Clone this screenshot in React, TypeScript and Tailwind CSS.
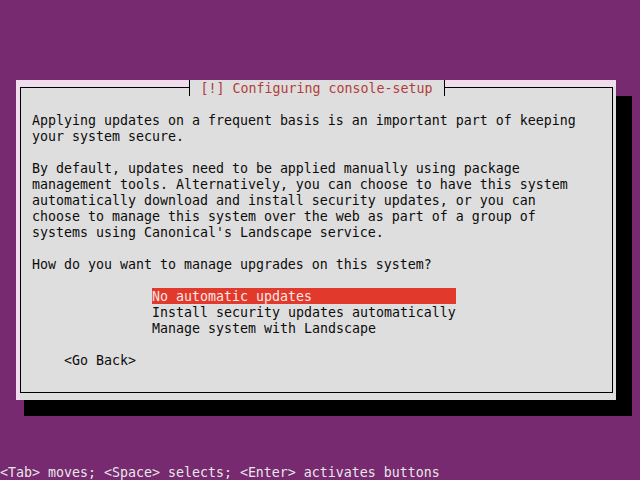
const INTRO = [
  "Applying updates on a frequent basis is an important part of keeping",
  "your system secure.",
  "",
  "By default, updates need to be applied manually using package",
  "management tools. Alternatively, you can choose to have this system",
  "automatically download and install security updates, or you can",
  "choose to manage this system over the web as part of a group of",
  "systems using Canonical's Landscape service.",
  "",
  "How do you want to manage upgrades on this system?",
  "",
];

const CHOICES = [
  "No automatic updates",
  "Install security updates automatically",
  "Manage system with Landscape",
];

// one text cell row: 16px tall, glyphs nudged down a px like the console font
const ROW = "h-[16px] whitespace-pre pt-[2px] leading-[14px]";

function Row({ children }: { children?: React.ReactNode }) {
  return <div className={ROW}>{children}</div>;
}

function DialogTitle() {
  return (
    <div className="-mt-[8px] flex h-[16px] justify-center">
      {/* ┤ */}
      <div className="flex h-[16px] w-[8px]">
        <div className="w-[4px]" />
        <div className="w-[1px] bg-black" />
        <div className="w-[3px] bg-[#dedede]" />
      </div>
      <div className={`${ROW} bg-[#dedede] text-[#b43c3c]`}>
        {" [!] Configuring console-setup "}
      </div>
      {/* ├ */}
      <div className="flex h-[16px] w-[8px]">
        <div className="w-[4px] bg-[#dedede]" />
        <div className="w-[1px] bg-black" />
        <div className="w-[3px]" />
      </div>
    </div>
  );
}

export default function App() {
  return (
    <div className="flex h-[480px] w-[640px] flex-col overflow-hidden bg-[#772a6f] font-['DejaVu_Sans_Mono',monospace] text-[13.29px] text-[#0c0c0c]">
      <div className="ml-[16px] mt-[80px] h-[320px] w-[600px] border-l-[4px] border-t-[7px] border-[#f0dcec] bg-[#dedede] shadow-[8px_16px_0_0_#000,16px_16px_0_0_#000]">
        <div className="mr-[3px] h-[306px] border border-black">
          <DialogTitle />
          <div className="pl-[11px] pt-[16px]">
            {INTRO.map((line, i) => (
              <Row key={i}>{line}</Row>
            ))}
            <div className="pl-[120px]">
              {CHOICES.map((c, i) => (
                <div
                  key={c}
                  className={
                    i === 0
                      ? `${ROW} w-[304px] bg-[#e2392d] text-[#fbe8e4]`
                      : `${ROW} w-[304px]`
                  }
                >
                  {c}
                </div>
              ))}
            </div>
            <Row />
            <div className="pl-[32px]">
              <Row>{"<Go Back>"}</Row>
            </div>
          </div>
        </div>
      </div>
      <div className={`${ROW} mt-auto text-[#e8e8e8]`}>
        {"<Tab> moves; <Space> selects; <Enter> activates buttons"}
      </div>
    </div>
  );
}
